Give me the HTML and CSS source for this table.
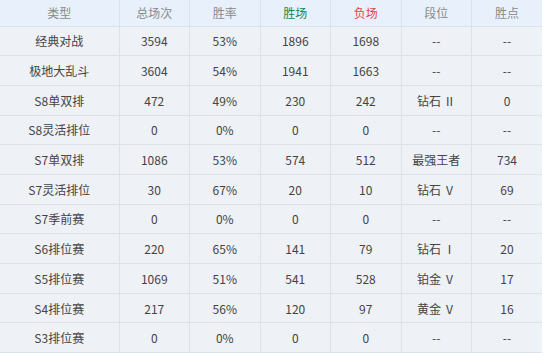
FILE: index.html
```html
<!DOCTYPE html>
<html lang="zh-CN">
<head>
    <meta charset="UTF-8">
    <title>战绩</title>
    <link rel="stylesheet" href="styles.css">
</head>
<body>
    <table class="record">
        <thead>
            <tr>
                <th class="type">类型</th>
                <th>总场次</th>
                <th>胜率</th>
                <th class="win">胜场</th>
                <th class="lose">负场</th>
                <th>段位</th>
                <th>胜点</th>
            </tr>
        </thead>
        <tbody>
            <tr><td>经典对战</td><td>3594</td><td>53%</td><td>1896</td><td>1698</td><td>--</td><td>--</td></tr>
            <tr><td>极地大乱斗</td><td>3604</td><td>54%</td><td>1941</td><td>1663</td><td>--</td><td>--</td></tr>
            <tr><td>S8单双排</td><td>472</td><td>49%</td><td>230</td><td>242</td><td>钻石 Ⅱ</td><td>0</td></tr>
            <tr><td>S8灵活排位</td><td>0</td><td>0%</td><td>0</td><td>0</td><td>--</td><td>--</td></tr>
            <tr><td>S7单双排</td><td>1086</td><td>53%</td><td>574</td><td>512</td><td>最强王者</td><td>734</td></tr>
            <tr><td>S7灵活排位</td><td>30</td><td>67%</td><td>20</td><td>10</td><td>钻石 Ⅴ</td><td>69</td></tr>
            <tr><td>S7季前赛</td><td>0</td><td>0%</td><td>0</td><td>0</td><td>--</td><td>--</td></tr>
            <tr><td>S6排位赛</td><td>220</td><td>65%</td><td>141</td><td>79</td><td>钻石 Ⅰ</td><td>20</td></tr>
            <tr><td>S5排位赛</td><td>1069</td><td>51%</td><td>541</td><td>528</td><td>铂金 Ⅴ</td><td>17</td></tr>
            <tr><td>S4排位赛</td><td>217</td><td>56%</td><td>120</td><td>97</td><td>黄金 Ⅴ</td><td>16</td></tr>
            <tr><td>S3排位赛</td><td>0</td><td>0%</td><td>0</td><td>0</td><td>--</td><td>--</td></tr>
        </tbody>
    </table>
</body>
</html>
```

FILE: styles.css
```css
* {
	margin: 0px;
	padding: 0px;
	box-sizing: border-box;
}
body {
	background-color: #ffffff;
	font-family: "Microsoft YaHei", "Noto Sans CJK SC", sans-serif;
	font-size: 12px;
	color: #444444;
}
.record {
	width: 542px;
	border-collapse: collapse;
	table-layout: fixed;
	background-color: #eef1f6;
}
.record th,
.record td {
	text-align: center;
	border-left: 1px solid #dce2ea;
	border-bottom: 1px solid #dce2ea;
	font-weight: normal;
	white-space: nowrap;
}
.record th:first-child,
.record td:first-child {
	border-left: none;
	width: 119px;
}
.record thead tr {
	height: 26px;
	background-color: #e8f1fb;
}
.record th {
	color: #8a8a8a;
}
.record th.win {
	color: #17864a;
}
.record th.lose {
	color: #ea3f48;
}
.record tbody tr {
	height: 29.7px;
}
```
